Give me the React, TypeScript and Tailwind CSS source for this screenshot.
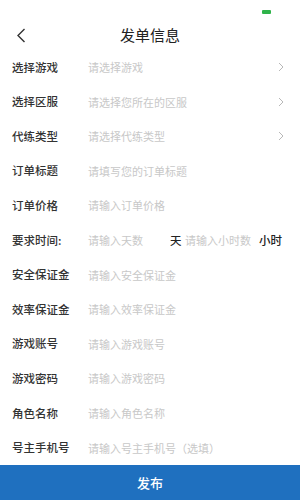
import React from "react";

const rows: { label: string; ph: string; arrow?: boolean }[] = [
  { label: "选择游戏", ph: "请选择游戏", arrow: true },
  { label: "选择区服", ph: "请选择您所在的区服", arrow: true },
  { label: "代练类型", ph: "请选择代练类型", arrow: true },
  { label: "订单标题", ph: "请填写您的订单标题" },
  { label: "订单价格", ph: "请输入订单价格" },
  { label: "TIME", ph: "" },
  { label: "安全保证金", ph: "请输入安全保证金" },
  { label: "效率保证金", ph: "请输入效率保证金" },
  { label: "游戏账号", ph: "请输入游戏账号" },
  { label: "游戏密码", ph: "请输入游戏密码" },
  { label: "角色名称", ph: "请输入角色名称" },
  { label: "号主手机号", ph: "请输入号主手机号（选填）" },
];

const font = { fontFamily: '"Noto Sans CJK SC", "Noto Sans", sans-serif' };

export default function App() {
  return (
    <div className="w-[300px] h-[500px] bg-white flex flex-col overflow-hidden" style={font}>
      <div className="h-[20px] flex justify-end items-start pr-[29px] pt-[10px]">
        <div className="w-[9px] h-[4px] bg-[#2fb34a] rounded-[1px]" />
      </div>
      <div className="h-[28px] relative flex items-center justify-center">
        <svg className="absolute left-[16px] top-[8px]" width="10" height="15" viewBox="0 0 10 15">
          <path d="M8.5 1 L2 7.5 L8.5 14" fill="none" stroke="#333" strokeWidth="1.4" />
        </svg>
        <span className="text-[15px] text-[#222] leading-none">发单信息</span>
      </div>
      <div className="flex flex-col pt-[2px]">
        {rows.map((r, i) =>
          r.label === "TIME" ? (
            <div key={i} className="h-[34.6px] flex items-center pl-[12px] text-[11.5px]">
              <span className="w-[76px] text-[#333] font-medium">要求时间:</span>
              <span className="w-[82px] text-[#c8c8c8] text-[11px]">请输入天数</span>
              <span className="w-[15px] text-[#222] font-medium">天</span>
              <span className="w-[74px] text-[#c8c8c8] text-[11px]">请输入小时数</span>
              <span className="text-[#222] font-medium">小时</span>
            </div>
          ) : (
            <div key={i} className="h-[34.6px] flex items-center pl-[12px] pr-[16px] text-[11.5px]">
              <span className="w-[76px] text-[#333] font-medium">{r.label}</span>
              <span className="flex-1 text-[#c8c8c8] text-[11px]">{r.ph}</span>
              {r.arrow && (
                <svg width="6" height="10" viewBox="0 0 6 10">
                  <path d="M1 1 L5 5 L1 9" fill="none" stroke="#b8b8b8" strokeWidth="1" />
                </svg>
              )}
            </div>
          )
        )}
      </div>
      <div className="flex-1 bg-[#1f70bf] flex items-center justify-center">
        <span className="text-white text-[13px] font-medium">发布</span>
      </div>
    </div>
  );
}
